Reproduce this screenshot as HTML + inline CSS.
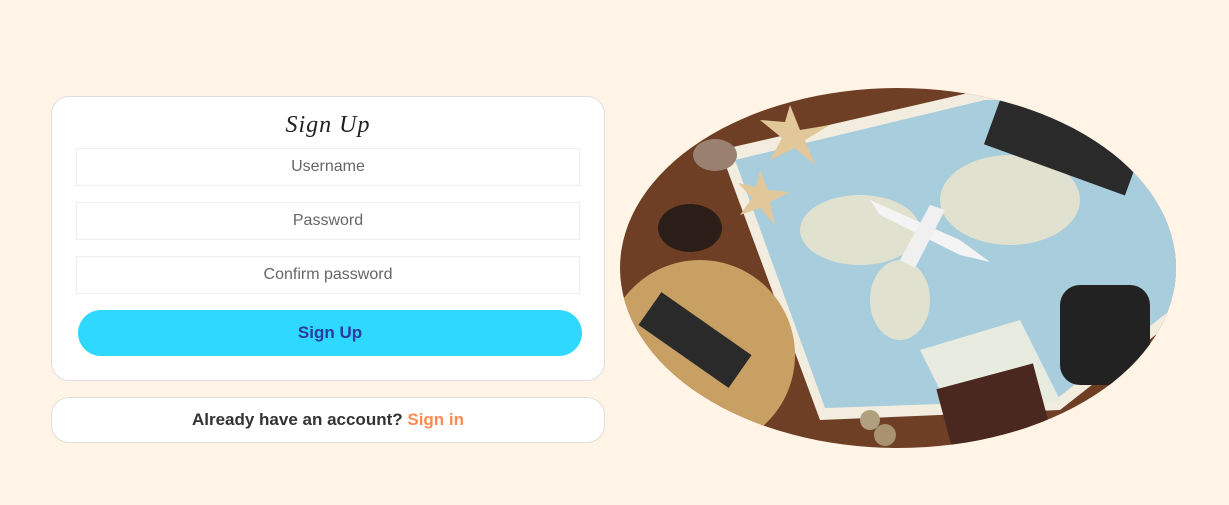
<!DOCTYPE html>
<html><head><meta charset="utf-8"><style>
body{margin:0;width:1229px;height:505px;background:#fff4e6;font-family:"Liberation Sans",sans-serif;position:relative;overflow:hidden}
.card{position:absolute;left:51px;top:96px;width:554px;height:285px;background:#fff;border:1px solid #ddd;border-radius:18px;box-sizing:border-box}
.title{position:absolute;left:51px;width:554px;top:112px;text-align:center;font-family:"Liberation Serif",serif;font-style:italic;font-size:24px;color:#222;letter-spacing:1px}
.inp{position:absolute;left:76px;width:504px;height:38px;border:1px solid #eeeef2;box-sizing:border-box;text-align:center;line-height:36px;font-size:16px;color:#666}
.btn{position:absolute;left:78px;top:310px;width:504px;height:46px;background:#2fd8fe;border-radius:23px;text-align:center;line-height:46px;font-weight:bold;font-size:17px;color:#2a3aa0}
.foot{position:absolute;left:51px;top:397px;width:554px;height:46px;background:#fff;border:1px solid #ddd;border-radius:18px;box-sizing:border-box;text-align:center;line-height:44px;font-weight:bold;font-size:17px;color:#333}
.foot span{color:#ff8a50}
</style></head><body>
<div class="card"></div>
<div class="title">Sign Up</div>
<div class="inp" style="top:148px">Username</div>
<div class="inp" style="top:202px">Password</div>
<div class="inp" style="top:256px">Confirm password</div>
<div class="btn">Sign Up</div>
<div class="foot">Already have an account? <span>Sign in</span></div>
<svg style="position:absolute;left:0;top:0" width="1229" height="505">
<defs><clipPath id="c"><ellipse cx="898" cy="268" rx="278" ry="180"/></clipPath></defs>
<g clip-path="url(#c)">
<rect x="600" y="80" width="600" height="380" fill="#6e3f24"/>
<polygon points="720,150 990,88 1200,90 1200,300 1060,410 820,420" fill="#f3ede0"/>
<polygon points="735,160 985,100 1190,100 1190,295 1055,400 825,408" fill="#a8cddd"/>
<ellipse cx="860" cy="230" rx="60" ry="35" fill="#efe6cc" opacity=".8"/>
<ellipse cx="1010" cy="200" rx="70" ry="45" fill="#efe6cc" opacity=".8"/>
<ellipse cx="900" cy="300" rx="30" ry="40" fill="#efe6cc" opacity=".8"/>
<circle cx="700" cy="355" r="95" fill="#c9a063"/>
<rect x="640" y="320" width="110" height="40" fill="#2a2a2a" transform="rotate(35 695 340)"/>
<rect x="990" y="110" width="150" height="60" fill="#2a2a2a" transform="rotate(20 1060 140)"/>
<rect x="1060" y="285" width="90" height="100" fill="#222" rx="20"/>
<polygon points="920,350 1020,320 1060,400 960,430" fill="#e8ece0"/>
<rect x="945" y="375" width="100" height="80" fill="#4a2820" transform="rotate(-15 995 415)"/>
<ellipse cx="690" cy="228" rx="32" ry="24" fill="#2b1e18"/>
<polygon points="790,105 800,130 830,125 805,140 815,165 795,148 770,160 782,138 760,120 785,122" fill="#e2c79a"/>
<polygon points="760,170 768,190 790,192 770,202 775,225 760,208 740,215 752,198 738,183 756,187" fill="#e2c79a"/>
<ellipse cx="715" cy="155" rx="22" ry="16" fill="#9a8070"/>
<polygon points="870,200 960,240 990,262 960,255 880,215" fill="#f4f4f4"/>
<polygon points="900,260 930,205 945,210 915,268" fill="#f0f0f0"/>
<circle cx="870" cy="420" r="10" fill="#b0a080"/><circle cx="885" cy="435" r="11" fill="#a89270"/>
</g></svg>
</body></html>
